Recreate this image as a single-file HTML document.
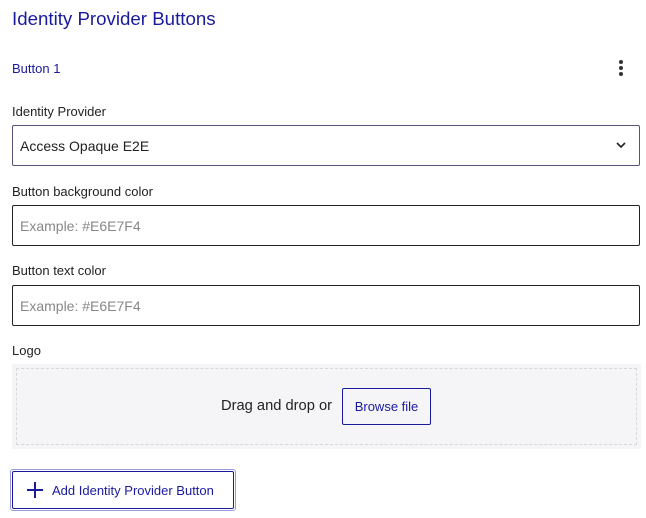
<!DOCTYPE html>
<html><head><style>
*{box-sizing:border-box;margin:0;padding:0}
body{width:646px;height:518px;background:#fff;font-family:"Liberation Sans",sans-serif;color:#222;position:relative;overflow:hidden}
.a{position:absolute}
.title{left:12px;top:8px;font-size:18.7px;color:#1a1a9c}
.b1{left:12px;top:61px;font-size:13px;color:#1a1a9c}
.dots{left:619px;top:60px;width:4px}
.dots i{display:block;width:4px;height:4px;border-radius:50%;background:#333;margin-bottom:2px}
.lbl{left:12px;font-size:13px;color:#222}
.inp{left:12px;width:628px;height:41px;border:1px solid #222;border-radius:2px;font-size:14px;padding:12px 7px;color:#888}
.sel{border-color:#55557a;color:#222}
.drop{left:12px;top:364px;width:629px;height:85px;background:#f5f5f7}
.drop .in{position:absolute;left:4px;top:4px;right:4px;bottom:4px;border:1px dashed #d8d8dc}
.dt{left:221px;top:398px;font-size:14.7px;color:#222}
.bf{left:342px;top:388px;width:89px;height:37px;border:1px solid #1a1a9c;border-radius:2px;font-size:13px;color:#1a1a9c;text-align:center;line-height:35px}
.add{left:10px;top:469px;width:226px;height:42px;border:1px solid #9a9ad8;border-radius:3px}
.add .in{position:absolute;left:1px;top:1px;right:1px;bottom:1px;border:1.5px solid #1a1a9c;border-radius:2px;font-size:13px;color:#1a1a9c;line-height:37px;padding-left:39px}
</style></head><body>
<div class="a title">Identity Provider Buttons</div>
<div class="a b1">Button 1</div>
<div class="a dots"><i></i><i></i><i></i></div>
<div class="a lbl" style="top:104px">Identity Provider</div>
<div class="a inp sel" style="top:125px">Access Opaque E2E</div>
<svg class="a" style="left:615px;top:140px" width="12" height="10" viewBox="0 0 12 10"><path d="M2 3l4 4 4-4" fill="none" stroke="#222" stroke-width="1.6"/></svg>
<div class="a lbl" style="top:184px">Button background color</div>
<div class="a inp" style="top:205px">Example: #E6E7F4</div>
<div class="a lbl" style="top:263px">Button text color</div>
<div class="a inp" style="top:285px">Example: #E6E7F4</div>
<div class="a lbl" style="top:343px">Logo</div>
<div class="a drop"><div class="in"></div></div>
<div class="a dt">Drag and drop or</div>
<div class="a bf">Browse file</div>
<div class="a add"><div class="in">Add Identity Provider Button</div></div>
<svg class="a" style="left:26px;top:481px" width="18" height="18" viewBox="0 0 18 18"><path d="M9 1v16M1 9h16" stroke="#1a1a9c" stroke-width="2"/></svg>
</body></html>
